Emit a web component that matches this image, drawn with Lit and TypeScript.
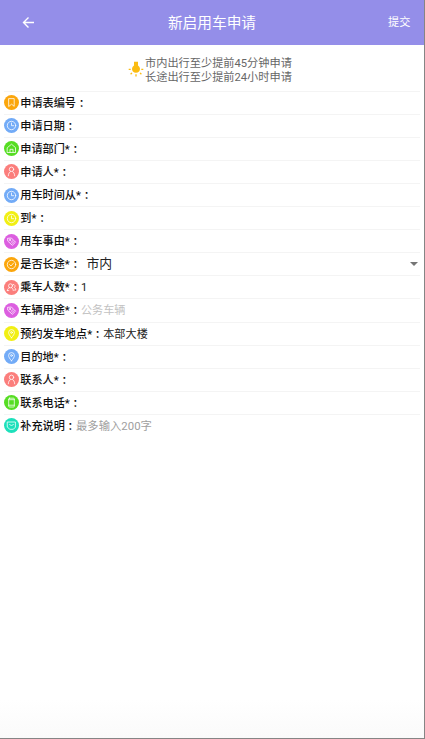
import { LitElement, html, css, svg, nothing } from "lit";
import { customElement, property } from "lit/decorators.js";
import { classMap } from "lit/directives/class-map.js";

const glyphs = {
  bookmark: svg`<path d="M5 3.600h5.200v7.700L7.600 9.200 5 11.300z"/>`,
  clock: svg`<circle cx="7.500" cy="7.500" r="4.200"/><path d="M7.500 5v2.700h2.200"/>`,
  home: svg`<path d="M3.500 6.600 7.500 3.200l4 3.400v4.900h-8z"/><path d="M6 11.300V8.300h3v3"/>`,
  person: svg`<circle cx="7.500" cy="5.300" r="2.200"/><path d="M4.300 11.800c.2-2.500 1.100-3.800 2.100-4.200M10.700 11.800c-.2-2.500-1.100-3.800-2.100-4.200"/>`,
  people: svg`<circle cx="6.500" cy="5.800" r="2"/><path d="M3.300 10.600c.2-1.900 1.100-2.500 2.100-2.900M7.600 7.700c1 .4 1.500 1.200 1.700 2.900M3.300 10.600h1.500M9 4.400c2.100-.2 2.700 2 1.300 3.100 1 .5 1.400 1.200 1.500 2.600H10.500"/>`,
  tag: svg`<path d="M3.900 4.300 7.400 4l4.100 4.200-3.200 3.100L4.100 7.400z"/><circle cx="5.900" cy="6" r=".6"/><path d="M7.200 8.300 8.600 7M8.500 9.200l1-.9"/>`,
  check: svg`<circle cx="7.500" cy="7.500" r="4.200"/><path d="M5.600 7.600 7 9l2.500-2.900"/>`,
  pin: svg`<path d="M7.500 11.800C5.700 9.600 4.600 8 4.600 6.500a2.900 2.900 0 0 1 5.800 0c0 1.500-1.100 3.100-2.900 5.300z"/><circle cx="7.500" cy="6.500" r=".9"/>`,
  phone: svg`<rect x="4.700" y="3.200" width="5.600" height="8.800" rx=".8"/><path d="M4.700 4.700h5.600M4.700 10.200h5.600"/>`,
  note: svg`<path d="M3.600 4h7.800v5.400l-2.300 1.900H5.900L3.600 9.400z"/><path d="M5.500 6.400c.7 1.500 3.300 1.500 4 0"/>`,
};

type Glyph = keyof typeof glyphs;

interface Field {
  icon: Glyph;
  tone: string;
  label: string;
  value?: string;
  kind?: "text" | "hint" | "note" | "select";
}

const fields: Field[] = [
  { icon: "bookmark", tone: "orange", label: "申请表编号" },
  { icon: "clock", tone: "blue", label: "申请日期" },
  { icon: "home", tone: "green", label: "申请部门*" },
  { icon: "person", tone: "red", label: "申请人*" },
  { icon: "clock", tone: "blue", label: "用车时间从*" },
  { icon: "clock", tone: "yellow", label: "到*" },
  { icon: "tag", tone: "purple", label: "用车事由*" },
  { icon: "check", tone: "orange", label: "是否长途*", value: "市内", kind: "select" },
  { icon: "people", tone: "red", label: "乘车人数*", value: "1", kind: "text" },
  { icon: "tag", tone: "purple", label: "车辆用途*", value: "公务车辆", kind: "hint" },
  { icon: "pin", tone: "yellow", label: "预约发车地点*", value: "本部大楼", kind: "text" },
  { icon: "pin", tone: "blue", label: "目的地*" },
  { icon: "person", tone: "red", label: "联系人*" },
  { icon: "phone", tone: "green", label: "联系电话*" },
  { icon: "note", tone: "teal", label: "补充说明", value: "最多输入200字", kind: "note" },
];

@customElement("form-row")
export class FormRow extends LitElement {
  @property({ attribute: false }) field!: Field;

  static styles = css`
    :host {
      display: flex;
      align-items: center;
      box-sizing: border-box;
      height: 23.1px;
      margin: 0 4px;
      border-bottom: 1px solid #f4f4f4;
      font-size: 11.150px;
      line-height: 16px;
      color: #111;
      white-space: nowrap;
    }
    :host(:last-child) { border-bottom-color: transparent; }
    .badge { width: 15px; height: 15px; margin-right: 1.300px; border-radius: 50%; flex: none; }
    .badge svg { display: block; fill: none; stroke: #fff; stroke-opacity: .85; stroke-width: .9; stroke-linejoin: round; stroke-linecap: round; }
    .orange { background: #fba60c; }
    .blue { background: #72abf7; }
    .green { background: #56dd23; }
    .red { background: #fb7e7c; }
    .yellow { background: #f1ef14; }
    .purple { background: #dc5ee0; }
    .teal { background: #1de0bb; }
    .label, .value { padding-top: 2px; }
    .label { font-weight: 500; }
    .colon { font-family: "Noto Sans CJK TC", sans-serif; font-weight: 500; }
    .value { color: #222; }
    .value.hint { color: #c2c2c2; }
    .value.note { color: #a0a0a0; font-size: 11.350px; padding-top: 0; }
    .value.select { font-size: 12.800px; margin-left: 5.500px; padding-top: 0; }
    .caret { margin-left: auto; margin-right: 2.500px; border: 4px solid transparent; border-top-color: #757575; border-bottom: 0; }
  `;

  render() {
    const { icon, tone, label, value, kind } = this.field;
    return html`
      <span class=${classMap({ badge: true, [tone]: true })}>
        <svg width="15" height="15" viewBox="0 0 15 15">${glyphs[icon]}</svg>
      </span>
      <span class="label">${label}</span><span class="colon">：</span>
      ${value ? html`<span class=${classMap({ value: true, [kind ?? "text"]: true })}>${value}</span>` : nothing}
      ${kind === "select" ? html`<span class="caret"></span>` : nothing}
    `;
  }
}

@customElement("app-root")
export class AppRoot extends LitElement {
  static styles = css`
    :host {
      display: flex;
      flex-direction: column;
      box-sizing: border-box;
      height: 739px;
      border-right: 1px solid #858585;
      border-bottom: 1px solid #858585;
      background: linear-gradient(#fff 700px, #fafafa);
      font-family: Roboto, "Noto Sans CJK SC", sans-serif;
      overflow: hidden;
    }
    header {
      display: grid;
      grid-template-columns: 60px 1fr 60px;
      align-items: center;
      height: 45px;
      flex: none;
      background: #948ee9;
      color: #fff;
    }
    .back { display: block; margin-left: 22px; }
    .title { text-align: center; font-size: 14.700px; line-height: 20px; }
    .submit { font-size: 11.200px; line-height: 16px; margin-left: 24px; }
    .tips {
      display: flex;
      align-items: center;
      height: 45.600px;
      margin: 0 4px;
      padding-left: 124px;
      border-bottom: 1px solid #f4f4f4;
      font-size: 11.200px;
      line-height: 14px;
      color: #666;
      white-space: nowrap;
    }
    .tips p { margin: 6.400px 0 0 1px; }
    .bulb { flex: none; margin-top: 2.400px; }
  `;

  render() {
    return html`
      <header>
        <svg class="back" width="13" height="13" viewBox="0 0 13 13" fill="none" stroke="#fff" stroke-width="1.400">
          <path d="M12 6.500H1.500M6.500 1.500l-5 5 5 5" />
        </svg>
        <div class="title">新启用车申请</div>
        <div class="submit">提交</div>
      </header>
      <section class="tips">
        <svg class="bulb" width="16" height="16" viewBox="0 0 16 16" fill="#fbbc12">
          <path d="M6 .7h4v3.700a4 4 0 1 1-4 0z" />
          <path d="M.7 8.300h2M13.300 8.300h2M2.600 13.300l1.400-1.400M13.400 13.300 12 11.900M8 13.300v2.200" stroke="#fbbc12" stroke-width="1.300" />
        </svg>
        <p>市内出行至少提前45分钟申请<br />长途出行至少提前24小时申请</p>
      </section>
      <main>${fields.map((f) => html`<form-row .field=${f}></form-row>`)}</main>
    `;
  }
}
